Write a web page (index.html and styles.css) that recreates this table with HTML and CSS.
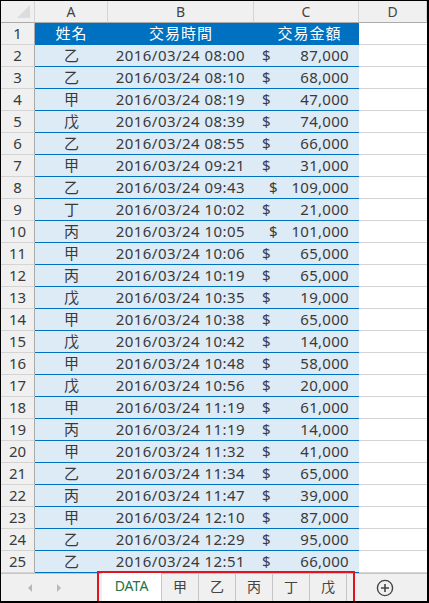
FILE: index.html
```html
<!DOCTYPE html>
<html>
<head>
<meta charset="utf-8">
<link rel="stylesheet" href="styles.css">
</head>
<body>
<div class="frame">
  <div class="sheet">
    <div class="row colhead">
      <div class="rh corner"><span class="tri"></span></div>
      <div class="c a">A</div>
      <div class="c b">B</div>
      <div class="c cc">C</div>
      <div class="c d">D</div>
    </div>
    <div class="row head">
      <div class="rh">1</div>
      <div class="c a">姓名</div>
      <div class="c b">交易時間</div>
      <div class="c cc"><span class="hc">交易金額</span></div>
      <div class="c d"></div>
    </div>
    <div id="rows"></div>
  </div>
  <div class="tabbar">
    <div class="nav"><span class="arr l"></span><span class="arr r"></span></div>
    <div class="tabs">
      <div class="tab active">DATA</div>
      <div class="tab">甲</div>
      <div class="tab">乙</div>
      <div class="tab">丙</div>
      <div class="tab">丁</div>
      <div class="tab">戊</div>
    </div>
    <div class="add">
      <svg width="18" height="18" viewBox="0 0 18 18"><circle cx="9" cy="9" r="7.6" fill="none" stroke="#444" stroke-width="1.4"/><path d="M9 5v8M5 9h8" stroke="#444" stroke-width="1.6"/></svg>
    </div>
    <div class="mark"></div>
  </div>
</div>
<script src="app.js"></script>
</body>
</html>
```
FILE: app.js
```js
const data = [
["乙","08:00","87,000"],["乙","08:10","68,000"],["甲","08:19","47,000"],["戊","08:39","74,000"],
["乙","08:55","66,000"],["甲","09:21","31,000"],["乙","09:43","109,000"],["丁","10:02","21,000"],
["丙","10:05","101,000"],["甲","10:06","65,000"],["丙","10:19","65,000"],["戊","10:35","19,000"],
["甲","10:38","65,000"],["戊","10:42","14,000"],["甲","10:48","58,000"],["戊","10:56","20,000"],
["甲","11:19","61,000"],["丙","11:19","14,000"],["甲","11:32","41,000"],["乙","11:34","65,000"],
["丙","11:47","39,000"],["甲","12:10","87,000"],["乙","12:29","95,000"],["乙","12:51","66,000"]
];
const host = document.getElementById("rows");
data.forEach((r, i) => {
  const row = document.createElement("div");
  row.className = "row data";
  const wide = r[2].length > 6 ? " wide" : "";
  row.innerHTML =
    '<div class="rh">' + (i + 2) + '</div>' +
    '<div class="c a">' + r[0] + '</div>' +
    '<div class="c b">2016/03/24 ' + r[1] + '</div>' +
    '<div class="c cc money' + wide + '"><span class="dl">$</span><span class="amt">' + r[2] + '</span></div>' +
    '<div class="c d"></div>';
  host.appendChild(row);
});
```
FILE: styles.css
```css
html, body { margin: 0; padding: 0; background: #fff; }
body {
  font-family: "Noto Sans", "Noto Sans CJK TC", sans-serif;
  color: #333;
}
.frame {
  position: relative;
  width: 429px;
  height: 603px;
  box-sizing: border-box;
  border-top: 1px solid #000;
  border-left: 1px solid #000;
  border-right: 2px solid #000;
  border-bottom: 2px solid #000;
  display: flex;
  flex-direction: column;
  overflow: hidden;
  background: #fff;
}
.sheet { display: flex; flex-direction: column; }
.row { display: flex; height: 22px; box-sizing: border-box; }
.rh {
  width: 34px;
  flex: none;
  box-sizing: border-box;
  background: #f0f0f0;
  border-right: 1px solid #ababab;
  border-bottom: 1px solid #d4d4d4;
  text-align: center;
  font-size: 15px;
  line-height: 21px;
  color: #3a3a3a;
}
.c {
  flex: none;
  box-sizing: border-box;
  font-size: 15px;
  line-height: 21px;
  text-align: center;
  white-space: nowrap;
}
.a { width: 73px; }
.b { width: 146px; }
.cc { width: 105px; }
.d { flex: 1; }
.colhead .rh, .colhead .c {
  background: #f0f0f0;
  border-bottom: 1px solid #ababab;
  border-right: 1px solid #d4d4d4;
  color: #444;
  font-size: 14px;
}
.colhead .rh { border-right: 1px solid #d4d4d4; }
.corner { position: relative; }
.tri {
  position: absolute;
  right: 4px;
  bottom: 4px;
  width: 0; height: 0;
  border-left: 13px solid transparent;
  border-bottom: 13px solid #dcdcdc;
}
.head .c.a, .head .c.b, .head .c.cc {
  background: #0070c0;
  color: #fff;
  border-bottom: 1px solid #0070c0;
}
.head .rh { border-bottom: 1px solid #d4d4d4; }
.hc { display: inline-block; margin-left: 6px; letter-spacing: 1px; }
.head .c.a, .head .c.b { letter-spacing: 1px; }
.d { border-bottom: 1px solid #d4d4d4; background: #fff; }
.data .c.a, .data .c.b, .data .c.cc {
  background: #ddebf7;
  border-bottom: 1px solid #0070c0;
  color: #3a3a3a;
}
.data .c.b { text-align: right; padding-right: 9px; letter-spacing: 0.45px; }
.money { display: flex; justify-content: space-between; padding: 0 10px 0 8px; letter-spacing: 0.3px; }
.money.wide .dl { margin-left: 7px; }
.tabbar {
  position: relative;
  flex: 1;
  display: flex;
  background: #f0f0f0;
  border-top: 1px solid #c6c6c6;
  align-items: stretch;
}
.nav { width: 101px; flex: none; position: relative; }
.arr {
  position: absolute;
  top: 10px;
  width: 0; height: 0;
  border-top: 4px solid transparent;
  border-bottom: 4px solid transparent;
}
.arr.l { left: 27px; border-right: 4px solid #b8b8b8; }
.arr.r { left: 56px; border-left: 4px solid #b8b8b8; }
.tabs { display: flex; height: 27px; }
.tab {
  box-sizing: border-box;
  width: 37px;
  font-size: 14px;
  line-height: 25px;
  text-align: center;
  color: #444;
  border-right: 1px solid #c6c6c6;
  font-family: "Noto Sans CJK TC", sans-serif;
}
.tab.active {
  width: 60px;
  background: #fff;
  color: #217346;
  font-family: "Noto Sans", sans-serif;
  margin-top: -1px;
}
.add { margin-left: 29px; padding-top: 5px; }
.mark {
  position: absolute;
  left: 96px;
  top: -3px;
  width: 254px;
  height: 30px;
  border: 2px solid #e0141e;
  pointer-events: none;
}
```
